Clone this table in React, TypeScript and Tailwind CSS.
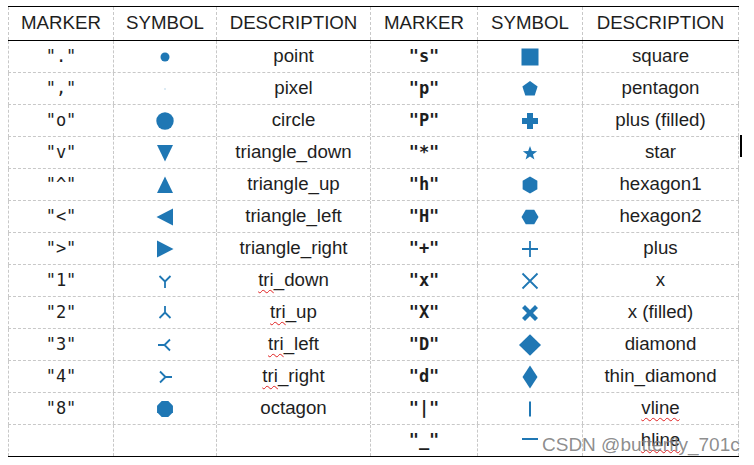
import React from "react";

// matplotlib marker reference table
const BLUE = "#1f77b4";

type Cell = { m: string; sym: string; desc: string } | null;

const rows: [Cell, Cell][] = [
  [{ m: '"."', sym: "point", desc: "point" }, { m: '"s"', sym: "square", desc: "square" }],
  [{ m: '","', sym: "pixel", desc: "pixel" }, { m: '"p"', sym: "pentagon", desc: "pentagon" }],
  [{ m: '"o"', sym: "circle", desc: "circle" }, { m: '"P"', sym: "plusFilled", desc: "plus (filled)" }],
  [{ m: '"v"', sym: "triDownFill", desc: "triangle_down" }, { m: '"*"', sym: "star", desc: "star" }],
  [{ m: '"^"', sym: "triUpFill", desc: "triangle_up" }, { m: '"h"', sym: "hexagon1", desc: "hexagon1" }],
  [{ m: '"<"', sym: "triLeftFill", desc: "triangle_left" }, { m: '"H"', sym: "hexagon2", desc: "hexagon2" }],
  [{ m: '">"', sym: "triRightFill", desc: "triangle_right" }, { m: '"+"', sym: "plus", desc: "plus" }],
  [{ m: '"1"', sym: "tri_down", desc: "tri_down" }, { m: '"x"', sym: "x", desc: "x" }],
  [{ m: '"2"', sym: "tri_up", desc: "tri_up" }, { m: '"X"', sym: "xFilled", desc: "x (filled)" }],
  [{ m: '"3"', sym: "tri_left", desc: "tri_left" }, { m: '"D"', sym: "diamond", desc: "diamond" }],
  [{ m: '"4"', sym: "tri_right", desc: "tri_right" }, { m: '"d"', sym: "thin", desc: "thin_diamond" }],
  [{ m: '"8"', sym: "octagon", desc: "octagon" }, { m: '"|"', sym: "vline", desc: "vline" }],
  [null, { m: '"_"', sym: "hline", desc: "hline" }],
];

function poly(n: number, r: number, rot: number) {
  const pts: string[] = [];
  for (let i = 0; i < n; i++) {
    const a = rot + (i * 2 * Math.PI) / n;
    pts.push(`${(12 + r * Math.cos(a)).toFixed(2)},${(12 + r * Math.sin(a)).toFixed(2)}`);
  }
  return pts.join(" ");
}

function starPts() {
  const pts: string[] = [];
  for (let i = 0; i < 10; i++) {
    const r = i % 2 === 0 ? 7.5 : 3.1;
    const a = -Math.PI / 2 + (i * Math.PI) / 5;
    pts.push(`${(12 + r * Math.cos(a)).toFixed(2)},${(12.5 + r * Math.sin(a)).toFixed(2)}`);
  }
  return pts.join(" ");
}

function Symbol({ name }: { name: string }) {
  const line = { stroke: BLUE, strokeWidth: 1.8, fill: "none" };
  let shape: React.ReactNode = null;
  switch (name) {
    case "point":
      shape = <circle cx={12} cy={12} r={4.5} fill={BLUE} />;
      break;
    case "pixel":
      shape = <rect x={11.5} y={11.5} width={1} height={1} fill={BLUE} opacity={0.6} />;
      break;
    case "circle":
      shape = <circle cx={12} cy={12} r={8.7} fill={BLUE} />;
      break;
    case "triDownFill":
      shape = <polygon points="4,4 20,4 12,20.5" fill={BLUE} />;
      break;
    case "triUpFill":
      shape = <polygon points="12,3.5 20,20 4,20" fill={BLUE} />;
      break;
    case "triLeftFill":
      shape = <polygon points="3.5,12 20,3.5 20,20.5" fill={BLUE} />;
      break;
    case "triRightFill":
      shape = <polygon points="20.5,12 4,3.5 4,20.5" fill={BLUE} />;
      break;
    case "tri_down":
      shape = <path d="M12 12.5 L12 19 M12 12.5 L6.5 7 M12 12.5 L17.5 7" {...line} />;
      break;
    case "tri_up":
      shape = <path d="M12 11.5 L12 5 M12 11.5 L6.5 17 M12 11.5 L17.5 17" {...line} />;
      break;
    case "tri_left":
      shape = <path d="M11.5 12 L5 12 M11.5 12 L17 6.5 M11.5 12 L17 17.5" {...line} />;
      break;
    case "tri_right":
      shape = <path d="M12.5 12 L19 12 M12.5 12 L7 6.5 M12.5 12 L7 17.5" {...line} />;
      break;
    case "octagon":
      shape = <polygon points={poly(8, 8.6, Math.PI / 8)} fill={BLUE} />;
      break;
    case "square":
      shape = <rect x={3.5} y={3.5} width={17} height={17} fill={BLUE} />;
      break;
    case "pentagon":
      shape = <polygon points={poly(5, 8, -Math.PI / 2)} fill={BLUE} />;
      break;
    case "plusFilled":
      shape = <polygon points="9,4 15,4 15,9 20,9 20,15 15,15 15,20 9,20 9,15 4,15 4,9 9,9" fill={BLUE} />;
      break;
    case "star":
      shape = <polygon points={starPts()} fill={BLUE} />;
      break;
    case "hexagon1":
      shape = <polygon points={poly(6, 8.5, -Math.PI / 2)} fill={BLUE} />;
      break;
    case "hexagon2":
      shape = <polygon points={poly(6, 8.5, 0)} fill={BLUE} />;
      break;
    case "plus":
      shape = <path d="M12 4 L12 20 M4 12 L20 12" {...line} />;
      break;
    case "x":
      shape = <path d="M4.5 4.5 L19.5 19.5 M19.5 4.5 L4.5 19.5" {...line} />;
      break;
    case "xFilled":
      shape = (
        <polygon
          points="7,4 12,9 17,4 20,7 15,12 20,17 17,20 12,15 7,20 4,17 9,12 4,7"
          fill={BLUE}
        />
      );
      break;
    case "diamond":
      shape = <polygon points="12,1.2 23,12 12,22.8 1,12" fill={BLUE} />;
      break;
    case "thin":
      shape = <polygon points="12,0.5 19.5,12 12,23.5 4.5,12" fill={BLUE} />;
      break;
    case "vline":
      shape = <path d="M12 4.5 L12 19.5" stroke={BLUE} strokeWidth={2} />;
      break;
    case "hline":
      shape = <path d="M4 10 L20 10" stroke={BLUE} strokeWidth={2} />;
      break;
  }
  return (
    <svg width={24} height={24} viewBox="0 0 24 24">
      {shape}
    </svg>
  );
}

function Desc({ text }: { text: string }) {
  const wavy = "underline decoration-wavy decoration-[#e02020] decoration-1 underline-offset-[3px]";
  if (text.startsWith("tri_")) {
    return (
      <span>
        <span className={wavy}>tri</span>
        {text.slice(3)}
      </span>
    );
  }
  if (text === "vline" || text === "hline") {
    return <span className={wavy}>{text}</span>;
  }
  return <span>{text}</span>;
}

const cellBase = "flex items-center justify-center border-r border-dashed border-[#c8c8c8]";

function HalfRow({ cell, bold }: { cell: Cell; bold: boolean }) {
  return (
    <>
      <div
        className={`${cellBase} font-['DejaVu_Sans_Mono',monospace] text-[17px] ${bold ? "font-bold" : ""}`}
      >
        {cell?.m}
      </div>
      <div className={cellBase}>{cell && <Symbol name={cell.sym} />}</div>
      <div className={cellBase}>{cell && <Desc text={cell.desc} />}</div>
    </>
  );
}

export default function App() {
  const cols = "grid grid-cols-[105px_103px_154px_107px_105px_156px]";
  return (
    <div className="relative w-[754px] h-[465px] bg-white font-['Liberation_Sans',Arial,sans-serif] text-[18.7px] text-[#1e1e1e] overflow-hidden">
      <div className="absolute left-[8px] top-[6px] w-[731px] flex flex-col">
        <div className="h-px bg-black" />
        {/* Header */}
        <div className={`${cols} h-[33px] border-l border-dashed border-[#c8c8c8]`}>
          {["MARKER", "SYMBOL", "DESCRIPTION", "MARKER", "SYMBOL", "DESCRIPTION"].map((h, i) => (
            <div key={i} className={cellBase}>
              {h}
            </div>
          ))}
        </div>
        <div className="h-px bg-black" />
        {/* Body */}
        {rows.map((r, i) => (
          <div
            key={i}
            className={`${cols} border-l border-dashed border-[#c8c8c8] ${
              i === rows.length - 1 ? "h-[31px]" : "h-[32px] border-b"
            }`}
          >
            <HalfRow cell={r[0]} bold={false} />
            <HalfRow cell={r[1]} bold={true} />
          </div>
        ))}
        <div className="h-px bg-black" />
      </div>

      {/* text cursor */}
      <div className="absolute left-[740px] top-[135px] w-[2px] h-[22px] bg-black" />

      {/* watermark */}
      <div className="absolute left-[542px] top-[431px] text-[19px] text-[#7f7f7f]/90 whitespace-nowrap">
        CSDN @butterfly_701c
      </div>
    </div>
  );
}
